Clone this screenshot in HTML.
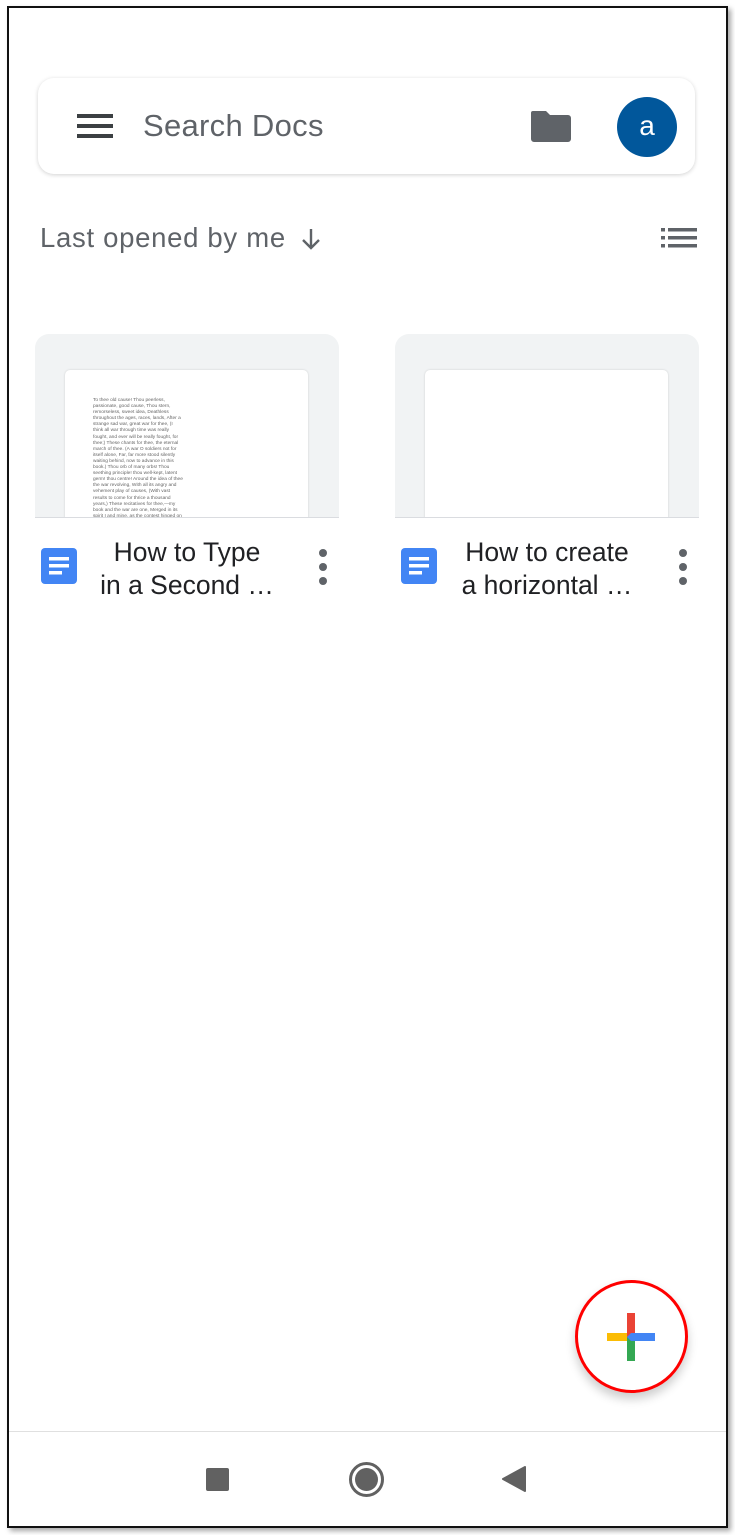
<!DOCTYPE html>
<html><head><meta charset="utf-8"><style>
*{margin:0;padding:0;box-sizing:border-box}
body{width:735px;height:1535px;background:#fff;position:relative;overflow:hidden;font-family:"Liberation Sans",Roboto,sans-serif}
.frame{position:absolute;left:7px;top:6px;width:721px;height:1522px;border:2px solid #111;box-shadow:3px 3px 5px rgba(0,0,0,.35)}
.abs{position:absolute}
.search{left:38px;top:78px;width:657px;height:96px;border-radius:16px;background:#fff;box-shadow:0 1px 4px rgba(0,0,0,.18)}
.bar{position:absolute;left:77px;width:36px;height:3.5px;background:#3c4043}
.card{width:304px;height:184px;background:#f1f3f4;border-radius:14px 14px 0 0;border-bottom:1px solid #dadce0;overflow:hidden}
.page{position:absolute;left:30px;top:36px;width:243px;height:160px;background:#fff;border-radius:5px;box-shadow:0 0 2px rgba(0,0,0,.15)}
.title{font-size:26.5px;color:#202124;text-align:center;line-height:33px;white-space:nowrap}
.dot{position:absolute;width:8px;height:8px;border-radius:50%;background:#5f6368}
</style></head><body>
<div class="frame"></div>
<div class="abs search"></div>
<div class="bar" style="top:114px"></div><div class="bar" style="top:124px"></div><div class="bar" style="top:134px"></div>
<div class="abs" style="left:143px;top:108px;font-size:31px;letter-spacing:0.3px;color:#5f6368">Search Docs</div>
<svg class="abs" style="left:529px;top:108px" width="44" height="36" viewBox="0 0 44 36"><path d="M4 3h13l4 4h18a3 3 0 0 1 3 3v21a3 3 0 0 1-3 3H5a3 3 0 0 1-3-3V5a2 2 0 0 1 2-2z" fill="#5f6368"/></svg>
<div class="abs" style="left:617px;top:97px;width:60px;height:60px;border-radius:50%;background:#01579b;color:#fff;font-size:28px;text-align:center;line-height:58px">a</div>
<div class="abs" style="left:40px;top:222px;font-size:27.5px;letter-spacing:0.7px;color:#5f6368">Last opened by me</div>
<svg class="abs" style="left:298px;top:226px" width="26" height="26" viewBox="0 0 26 26"><path d="M13 3v19M5 14l8 8 8-8" stroke="#5f6368" stroke-width="2.4" fill="none"/></svg>
<svg class="abs" style="left:660px;top:227px" width="38" height="22" viewBox="0 0 38 22"><g fill="#5f6368"><rect x="1" y="1" width="4" height="3.5"/><rect x="1" y="9" width="4" height="3.5"/><rect x="1" y="17" width="4" height="3.5"/><rect x="8" y="1" width="29" height="3.5"/><rect x="8" y="9" width="29" height="3.5"/><rect x="8" y="17" width="29" height="3.5"/></g></svg>

<div class="abs card" style="left:35px;top:334px"><div class="page">
<div style="position:absolute;left:28px;top:28px;width:90px;font-size:4.8px;line-height:6.1px;color:#666">To thee old cause! Thou peerless, passionate, good cause, Thou stern, remorseless, sweet idea, Deathless throughout the ages, races, lands, After a strange sad war, great war for thee, (I think all war through time was really fought, and ever will be really fought, for thee;) These chants for thee, the eternal march of thee. (A war O soldiers not for itself alone, Far, far more stood silently waiting behind, now to advance in this book.) Thou orb of many orbs! Thou seething principle! thou well-kept, latent germ! thou centre! Around the idea of thee the war revolving, With all its angry and vehement play of causes, (With vast results to come for thrice a thousand years,) These recitatives for thee,—my book and the war are one, Merged in its spirit I and mine, as the contest hinged on thee,</div>
</div></div>
<div class="abs card" style="left:395px;top:334px"><div class="page"></div></div>

<svg class="abs" style="left:41px;top:548px" width="36" height="36" viewBox="0 0 36 36"><rect width="36" height="36" rx="4" fill="#4285f4"/><g fill="#fff"><rect x="8" y="9" width="20" height="3.5"/><rect x="8" y="16" width="20" height="3.5"/><rect x="8" y="23" width="13" height="3.5"/></g></svg>
<svg class="abs" style="left:401px;top:548px" width="36" height="36" viewBox="0 0 36 36"><rect width="36" height="36" rx="4" fill="#4285f4"/><g fill="#fff"><rect x="8" y="9" width="20" height="3.5"/><rect x="8" y="16" width="20" height="3.5"/><rect x="8" y="23" width="13" height="3.5"/></g></svg>
<div class="abs title" style="left:87px;top:536px;width:200px">How to Type<br>in a Second …</div>
<div class="abs title" style="left:447px;top:536px;width:200px">How to create<br>a horizontal …</div>
<div class="dot" style="left:319px;top:549px"></div><div class="dot" style="left:319px;top:563px"></div><div class="dot" style="left:319px;top:577px"></div>
<div class="dot" style="left:679px;top:549px"></div><div class="dot" style="left:679px;top:563px"></div><div class="dot" style="left:679px;top:577px"></div>

<div class="abs" style="left:575px;top:1280px;width:113px;height:113px;border-radius:50%;background:#fff;border:3px solid #f00;box-shadow:0 6px 10px rgba(0,0,0,.2)"></div>
<svg class="abs" style="left:606px;top:1312px" width="50" height="50" viewBox="0 0 50 50">
<rect x="1" y="21" width="24" height="8" fill="#fbbc04"/>
<rect x="21" y="1" width="8" height="24" fill="#ea4335"/>
<rect x="21" y="25" width="8" height="24" fill="#34a853"/>
<rect x="25" y="21" width="24" height="8" fill="#4285f4"/>
<path d="M21 25l4-4v8z" fill="#4285f4"/></svg>

<div class="abs" style="left:9px;top:1431px;width:717px;height:1px;background:#e0e0e0"></div>
<div class="abs" style="left:206px;top:1468px;width:23px;height:23px;background:#616161;border-radius:2px"></div>
<div class="abs" style="left:349px;top:1462px;width:35px;height:35px;border-radius:50%;border:3px solid #616161"></div>
<div class="abs" style="left:355px;top:1468px;width:23px;height:23px;border-radius:50%;background:#616161"></div>
<svg class="abs" style="left:500px;top:1465px" width="27" height="28" viewBox="0 0 27 28"><path d="M25 2v24L3 14z" fill="#616161" stroke="#616161" stroke-width="2" stroke-linejoin="round"/></svg>
</body></html>
